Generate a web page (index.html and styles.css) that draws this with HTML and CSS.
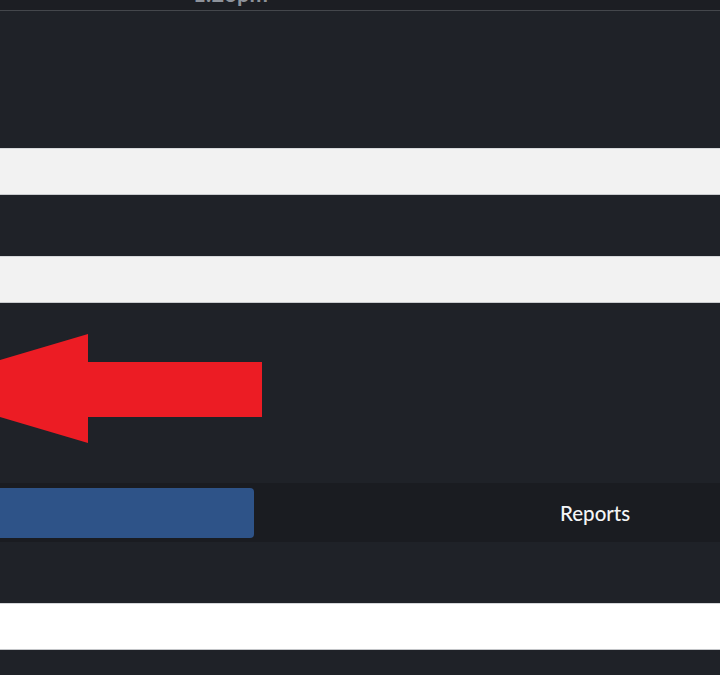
FILE: index.html
```html
<!DOCTYPE html>
<html lang="en">
<head>
<meta charset="utf-8">
<title>Reports</title>
<link rel="stylesheet" href="styles.css">
</head>
<body>
  <header class="topbar">
    <span class="time">1:23pm</span>
  </header>
  <main class="content">
    <div class="field field-first"></div>
    <div class="field field-second"></div>
    <div class="arrow-zone">
      <svg class="arrow" width="262" height="110" viewBox="0 0 262 110" aria-hidden="true">
        <polygon points="-96,54.5 88,0 88,28 262,28 262,83 88,83 88,109" fill="#ec1c24"/>
      </svg>
    </div>
    <nav class="tabs">
      <div class="tab tab-active"></div>
      <div class="tab tab-reports">Reports</div>
    </nav>
    <div class="whitebar"></div>
  </main>
</body>
</html>
```

FILE: styles.css
```css
html, body {
  margin: 0;
  padding: 0;
}
body {
  background: #1f2228;
  font-family: Lato, "Open Sans", sans-serif;
  width: 720px;
  height: 675px;
  overflow: hidden;
}
.topbar {
  height: 10px;
  background: #1c1e23;
  border-bottom: 1px solid #44474c;
  overflow: hidden;
  position: relative;
}
.time {
  display: block;
  margin-left: 193px;
  margin-top: -15px;
  font-size: 22px;
  font-weight: 700;
  line-height: 18px;
  color: #8d929a;
}
.content {
  display: flex;
  flex-direction: column;
}
.field {
  height: 45px;
  background: #f2f2f2;
  border-top: 1px solid #d6d8db;
  border-bottom: 1px solid #c9cbce;
}
.field-first {
  margin-top: 137px;
}
.field-second {
  margin-top: 61px;
}
.arrow-zone {
  height: 180px;
  position: relative;
}
.arrow {
  position: absolute;
  left: 0;
  top: 31px;
}
.tabs {
  height: 59px;
  background: #1a1c21;
  display: grid;
  grid-template-columns: 254px 1fr;
  align-items: center;
}
.tab-active {
  height: 50px;
  margin-top: 1px;
  background: #2e5388;
  border-radius: 0 4px 4px 0;
}
.tab-reports {
  color: #f4f5f6;
  font-size: 20.5px;
  font-weight: 500;
  padding-left: 306px;
  line-height: 24px;
  margin-top: 1px;
}
.whitebar {
  margin-top: 61px;
  height: 45px;
  background: #ffffff;
  border-top: 1px solid #d4d6d9;
  border-bottom: 1px solid #c3c5c8;
}
```
